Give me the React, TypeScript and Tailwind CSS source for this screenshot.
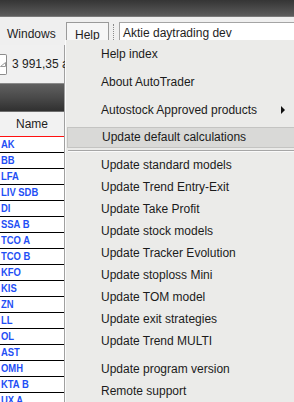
import type { ReactNode } from "react"

const font = { fontFamily: '"Liberation Sans", Arial, sans-serif' }

const tickers = [
  "AK", "BB", "LFA", "LIV SDB", "DI", "SSA B", "TCO A", "TCO B", "KFO",
  "KIS", "ZN", "LL", "OL", "AST", "OMH", "KTA B", "UX A",
]

const models = [
  "Update standard models",
  "Update Trend Entry-Exit",
  "Update Take Profit",
  "Update stock models",
  "Update Tracker Evolution",
  "Update stoploss Mini",
  "Update TOM model",
  "Update exit strategies",
  "Update Trend MULTI",
]

function MenuItem({ children, tall, arrow }: { children: ReactNode; tall?: boolean; arrow?: boolean }) {
  return (
    <div className={`flex items-center justify-between pl-[35px] pr-[8px] ${tall ? "h-[28px]" : "h-[22px]"}`}>
      <span>{children}</span>
      {arrow && (
        <svg width="5" height="8" viewBox="0 0 5 8">
          <path d="M0 0 L4 4 L0 8 Z" fill="#111" />
        </svg>
      )}
    </div>
  )
}

function HelpMenu() {
  return (
    <div className="absolute left-[65px] top-[40px] w-[229px] h-[362px] bg-[#ebebe9] border-l border-[#fbfbfb] text-[12px] text-[#1b1b1b] flex flex-col">
      <MenuItem tall>Help index</MenuItem>
      <MenuItem tall>About AutoTrader</MenuItem>
      <MenuItem tall arrow>Autostock Approved products</MenuItem>
      <div className="h-[26px] flex items-center pl-[1px]">
        <div className="h-[21px] w-full flex items-center pl-[34px] bg-[#d9d9d7] border-y border-l border-[#c4c4c2]">
          Update default calculations
        </div>
      </div>
      <div className="h-px bg-[#a6a6a6] ml-[2px]" />
      <div className="h-px bg-[#fafafa] ml-[2px]" />
      <div className="h-[2px]" />
      {models.map((m) => (
        <MenuItem key={m}>{m}</MenuItem>
      ))}
      <div className="h-[6px]" />
      <MenuItem>Update program version</MenuItem>
      <MenuItem>Remote support</MenuItem>
    </div>
  )
}

export default function App() {
  return (
    <div className="relative w-[294px] h-[402px] overflow-hidden bg-[#f0f0f0]" style={font}>
      <div className="h-[17px] bg-gradient-to-b from-[#353535] to-[#5c5c5c] border-b border-[#7a7a7a]" />
      <div className="h-[28px] flex items-start text-[12px] text-[#1e1e1e] bg-[#efefef]">
        <span className="pl-[7px] pt-[8px] w-[66px]">Windows</span>
        <div className="mt-[5px] h-[23px] w-[43px] border border-b-0 border-[#9a9a9a] bg-[#f6f6f6] pl-[8px] pt-[3px]">
          Help
        </div>
        <div className="mt-[7px] ml-[4px] h-[16px] border-l border-dotted border-[#8a8a8a]" />
        <div className="mt-[5px] ml-[5px] flex-1 h-[19px] bg-white border border-r-0 border-[#a4a4a4] pl-[3px] pt-[1px]">
          Aktie daytrading dev
        </div>
      </div>

      <div className="w-[65px] border-r border-[#a0a0a0]">
        <div className="h-[38px] flex items-center gap-[5px] text-[12px] text-[#1e1e1e] whitespace-nowrap">
          <div className="w-[12px] h-[21px] bg-white border border-l-0 border-[#8c8c8c] rounded-r-[2px] flex items-center justify-center">
            <svg width="6" height="5" viewBox="0 0 6 5">
              <path d="M0.5 4.5 L5.5 4.5 L5.5 0.5 Z" fill="none" stroke="#9a9a9a" />
            </svg>
          </div>
          <span>3 991,35 a</span>
        </div>
        <div className="h-[29px] bg-gradient-to-b from-[#606060] via-[#4a4a4a] to-[#303030] border-t border-[#8a8a8a] border-b border-b-[#6e6e6e]" />
        <div className="h-[24px] flex items-center pl-[16px] text-[12px] text-[#1e1e1e] bg-[#f2f2f2]">Name</div>
        <div className="border-t border-[#ff1010] bg-white">
          {tickers.map((t) => (
            <div
              key={t}
              className="h-[16px] border-b border-black flex items-center pl-px text-[#1f4ff5] leading-none whitespace-nowrap overflow-hidden"
            >
              <span className="inline-block text-[11.5px] font-bold origin-left scale-x-[0.82]">{t}</span>
            </div>
          ))}
        </div>
      </div>

      <HelpMenu />
    </div>
  )
}
